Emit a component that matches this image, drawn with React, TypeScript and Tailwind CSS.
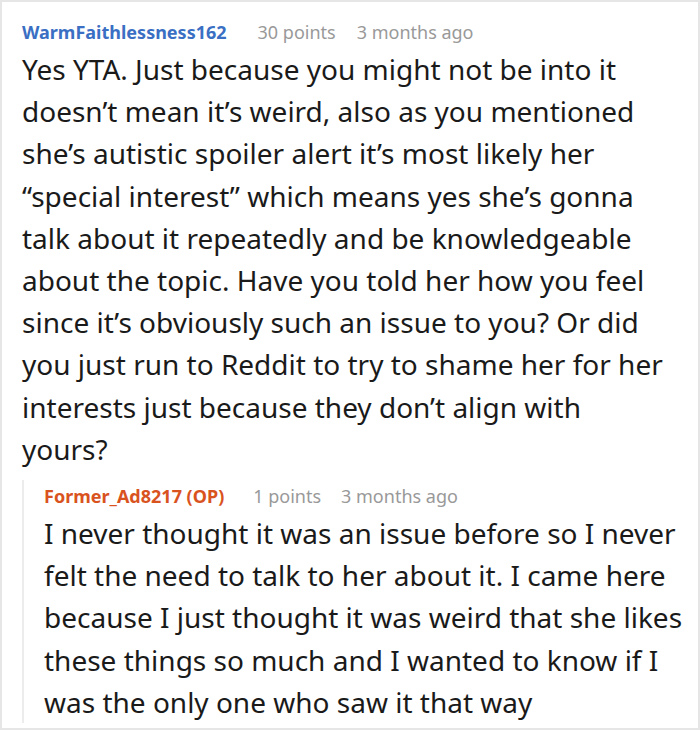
export default function App() {
  return (
    <div className="w-[700px] h-[730px] overflow-hidden bg-white border-2 border-[#e6e6e6] font-['Noto_Sans',sans-serif]">
      {/* top-level comment */}
      <div className="pl-5 pr-[28px] pt-[14px]">
        <div className="flex items-baseline text-[18px] leading-[32px]">
          <span className="font-bold text-[#3a6fc4]">WarmFaithlessness162</span>
          <span className="ml-[31px] text-[#999999]">30 points</span>
          <span className="ml-[21px] text-[#999999]">3 months ago</span>
        </div>
        <p className="text-[28px] leading-[42.2px] text-[#1a1a1a]">
          Yes YTA. Just because you might not be into it doesn’t mean it’s weird, also as you mentioned she’s autistic spoiler alert it’s most likely her “special interest” which means yes she’s gonna talk about it repeatedly and be knowledgeable about the topic. Have you told her how you feel since it’s obviously such an issue to you? Or did you just run to Reddit to try to shame her for her interests just because they don’t align with yours?
        </p>
      </div>

      {/* reply */}
      <div className="ml-5 mt-[10px] border-l-2 border-[#ececec] pl-5 pr-[8px]">
        <div className="flex items-baseline text-[18px] leading-[32px]">
          <span className="font-bold text-[#d9531e]">Former_Ad8217 (OP)</span>
          <span className="ml-[29px] text-[#999999]">1 points</span>
          <span className="ml-[20px] text-[#999999]">3 months ago</span>
        </div>
        <p className="text-[28px] leading-[42.2px] text-[#1a1a1a]">
          I never thought it was an issue before so I never felt the need to talk to her about it. I came here because I just thought it was weird that she likes these things so much and I wanted to know if I was the only one who saw it that way
        </p>
      </div>
    </div>
  );
}
